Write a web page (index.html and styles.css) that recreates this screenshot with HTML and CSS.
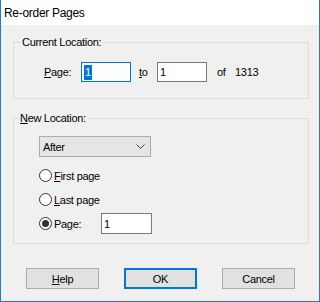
FILE: index.html
```html
<!DOCTYPE html>
<html>
<head>
	<title>Re-order Pages</title>
	<meta charset="utf-8">
	<link rel="stylesheet" href="styles.css">
</head>
<body>
<div class="dialog">
	<div class="titlebar">Re-order Pages</div>
	<div class="client">
		<div class="group group-current">
			<div class="legend">Current Location:</div>
			<div class="range-row">
				<span class="lbl lbl-page"><u>P</u>age:</span>
				<span class="field focused"><span class="sel">1</span></span>
				<span class="lbl lbl-to"><u>t</u>o</span>
				<span class="field">1</span>
				<span class="lbl lbl-of">of</span>
				<span class="lbl">1313</span>
			</div>
		</div>

		<div class="group group-new">
			<div class="legend"><u>N</u>ew Location:</div>
			<div class="combo">
				<span>After</span>
				<svg class="chevron" width="9" height="5" viewBox="0 0 9 5"><path d="M0.5 0.5 L4.5 4.5 L8.5 0.5" fill="none" stroke="#444" stroke-width="1"/></svg>
			</div>
			<div class="radio-row"><span class="radio"></span><span class="radio-lbl"><u>F</u>irst page</span></div>
			<div class="radio-row"><span class="radio"></span><span class="radio-lbl"><u>L</u>ast page</span></div>
			<div class="radio-row">
				<span class="radio checked"></span><span class="radio-lbl radio-lbl-page">Page:</span>
				<span class="field field-page">1</span>
			</div>
		</div>

		<div class="buttons">
			<span class="btn"><u>H</u>elp</span>
			<span class="btn btn-default">OK</span>
			<span class="btn">Cancel</span>
		</div>
	</div>
</div>
</body>
</html>
```

FILE: styles.css
```css
*{
	margin: 0;
	padding: 0;
	box-sizing: border-box;
}
body{
	font-family: "Liberation Sans", Arial, sans-serif;
	font-size: 11px;
	letter-spacing: -0.3px;
	color: #000;
	background: #f0f0f0;
}
u{
	text-decoration: underline;
	text-underline-offset: 1px;
}
.dialog{
	width: 320px;
	height: 302px;
	border: 1px solid #2b79bd;
	border-top: none;
	background: #f0f0f0;
}
.titlebar{
	height: 25px;
	background: #fff;
	padding: 1px 0 0 3px;
	line-height: 24px;
	font-size: 12px;
	letter-spacing: -0.3px;
}
.client{
	padding: 17px 10px 0 12px;
}
.group{
	border: 1px solid #dcdcdc;
	width: 296px;
}
.group-current{
	height: 57px;
}
.group-new{
	height: 126px;
	margin-top: 19px;
}
.legend{
	display: table;
	height: 13px;
	line-height: 13px;
	margin-top: -7px;
	padding: 0 2px;
	background: #f0f0f0;
}
.group-current .legend{
	margin-left: 6px;
}
.group-new .legend{
	margin-left: 4px;
}
.range-row{
	display: flex;
	align-items: center;
	margin-top: 13px;
	padding-left: 30px;
	height: 20px;
}
.lbl-page{
	width: 37px;
}
.lbl-to{
	width: 26px;
	padding-left: 8px;
}
.lbl-of{
	width: 28px;
	padding-left: 10px;
}
.field{
	display: flex;
	align-items: center;
	width: 50px;
	height: 20px;
	background: #fff;
	border: 1px solid #7a7a7a;
	padding-left: 2px;
}
.field.focused{
	border-color: #0078d7;
}
.sel{
	background: #0078d7;
	color: #fff;
	line-height: 15px;
	padding: 0 1px;
}
.combo{
	display: flex;
	align-items: center;
	justify-content: space-between;
	margin: 11px 0 0 25px;
	width: 112px;
	height: 21px;
	background: #e5e5e5;
	border: 1px solid #acacac;
	padding: 0 5px 0 3px;
}
.chevron{
	display: block;
}
.radio-row{
	display: flex;
	align-items: center;
	height: 21px;
	margin-left: 25px;
	margin-top: 3px;
}
.combo + .radio-row{
	margin-top: 8px;
}
.radio{
	width: 13px;
	height: 13px;
	border: 1px solid #333;
	border-radius: 50%;
	background: #fff;
	display: flex;
	align-items: center;
	justify-content: center;
}
.radio.checked::after{
	content: "";
	width: 7px;
	height: 7px;
	border-radius: 50%;
	background: #333;
}
.radio-lbl{
	padding-left: 2px;
}
.radio-lbl-page{
	width: 49px;
}
.field-page{
	height: 21px;
	width: 51px;
}
.buttons{
	display: flex;
	gap: 25px;
	margin-top: 24px;
	padding-left: 13px;
}
.btn{
	display: flex;
	align-items: center;
	justify-content: center;
	width: 73px;
	height: 21px;
	background: #e1e1e1;
	border: 1px solid #adadad;
}
.btn-default{
	border: 2px solid #0078d7;
}
```
